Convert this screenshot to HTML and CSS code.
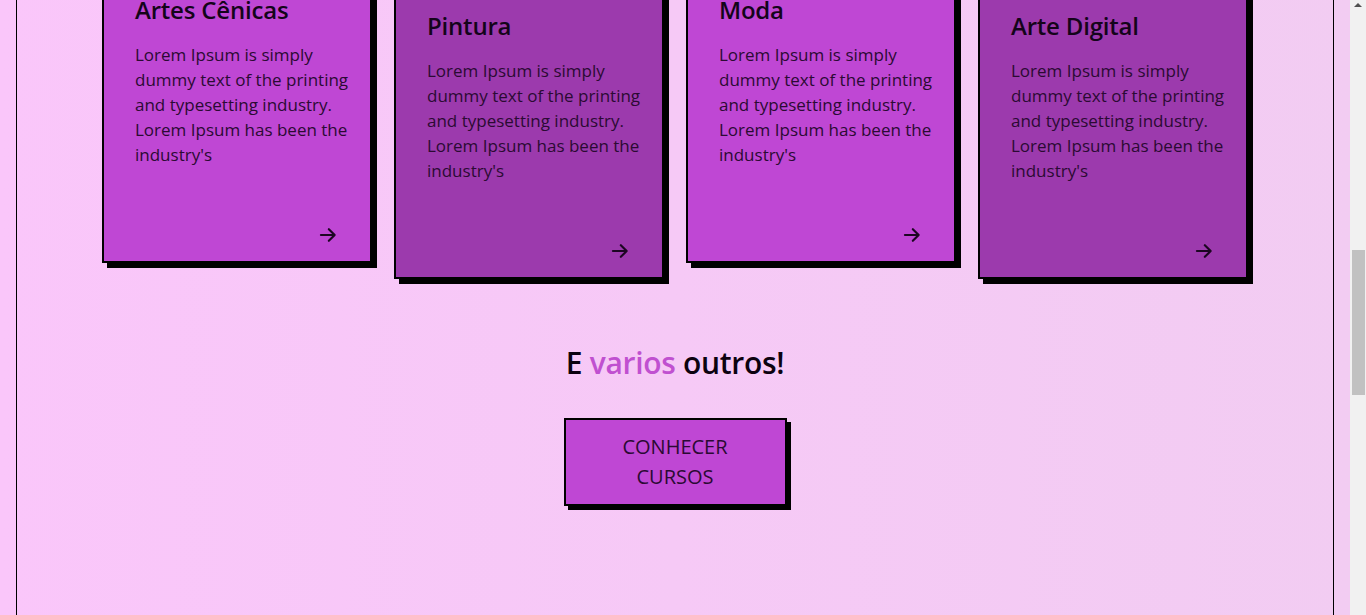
FILE: index.html
```html
<!DOCTYPE html>
<html lang="pt-BR">
<head>
<meta charset="utf-8">
<title>Cursos</title>
<link rel="stylesheet" href="styles.css">
</head>
<body>
<div class="page">
  <div class="frame">
    <section class="cards">
      <article class="card card-light">
        <h3 class="card-title">Artes Cênicas</h3>
        <p class="card-text">Lorem Ipsum is simply dummy text of the printing and typesetting industry. Lorem Ipsum has been the industry's</p>
        <div class="card-foot">
          <svg class="arrow" viewBox="0 0 24 24" width="20" height="20"><path d="M3.5 12h16.5M13 5l7 7-7 7" fill="none" stroke="#1c0622" stroke-width="2.6" stroke-linecap="round" stroke-linejoin="round"/></svg>
        </div>
      </article>
      <article class="card card-dark card-low">
        <h3 class="card-title">Pintura</h3>
        <p class="card-text">Lorem Ipsum is simply dummy text of the printing and typesetting industry. Lorem Ipsum has been the industry's</p>
        <div class="card-foot">
          <svg class="arrow" viewBox="0 0 24 24" width="20" height="20"><path d="M3.5 12h16.5M13 5l7 7-7 7" fill="none" stroke="#1c0622" stroke-width="2.6" stroke-linecap="round" stroke-linejoin="round"/></svg>
        </div>
      </article>
      <article class="card card-light">
        <h3 class="card-title">Moda</h3>
        <p class="card-text">Lorem Ipsum is simply dummy text of the printing and typesetting industry. Lorem Ipsum has been the industry's</p>
        <div class="card-foot">
          <svg class="arrow" viewBox="0 0 24 24" width="20" height="20"><path d="M3.5 12h16.5M13 5l7 7-7 7" fill="none" stroke="#1c0622" stroke-width="2.6" stroke-linecap="round" stroke-linejoin="round"/></svg>
        </div>
      </article>
      <article class="card card-dark card-low">
        <h3 class="card-title">Arte Digital</h3>
        <p class="card-text">Lorem Ipsum is simply dummy text of the printing and typesetting industry. Lorem Ipsum has been the industry's</p>
        <div class="card-foot">
          <svg class="arrow" viewBox="0 0 24 24" width="20" height="20"><path d="M3.5 12h16.5M13 5l7 7-7 7" fill="none" stroke="#1c0622" stroke-width="2.6" stroke-linecap="round" stroke-linejoin="round"/></svg>
        </div>
      </article>
    </section>
    <section class="more">
      <h2 class="more-title">E <span class="accent">varios</span> outros!</h2>
      <a class="more-button" href="#">CONHECER CURSOS</a>
    </section>
  </div>
</div>
<div class="scrollbar">
  <div class="scroll-up"></div>
  <div class="scroll-thumb"></div>
</div>
</body>
</html>
```

FILE: styles.css
```css
* { box-sizing: border-box; }

html, body {
  margin: 0;
  height: 615px;
  overflow: hidden;
}

body {
  display: flex;
  font-family: "Open Sans", "DejaVu Sans", sans-serif;
}

.page {
  flex: 1;
  height: 615px;
  padding: 0 16px;
  background: linear-gradient(to right, #fac6fa, #f2ccf2);
}

.frame {
  height: 100%;
  border-left: 1px solid #000;
  border-right: 1px solid #000;
  display: flex;
  flex-direction: column;
  align-items: center;
}

.cards {
  display: flex;
  align-items: flex-start;
  gap: 22px;
  margin-top: -26px;
}

.card {
  width: 270px;
  height: 289px;
  border: 2px solid #000;
  box-shadow: 5px 5px 0 #000;
  padding: 16px 32px 16px 31px;
  display: flex;
  flex-direction: column;
  color: #2b0a33;
}

.card-light { background: #bf47d4; }
.card-dark { background: #9c3aad; }
.card-low { margin-top: 16px; }

.card-title {
  margin: 0 0 14px;
  font-size: 24px;
  line-height: 36px;
  font-weight: 600;
  color: #14041a;
  letter-spacing: -0.2px;
}

.card-text {
  margin: 0 -12px 0 0;
  font-size: 17px;
  line-height: 25px;
  font-weight: 400;
}

.card-foot {
  margin-top: auto;
  display: flex;
  justify-content: flex-end;
}

.arrow { display: block; }

.more {
  display: flex;
  flex-direction: column;
  align-items: center;
}

.more-title {
  margin: 64px 0 35px;
  font-size: 30px;
  line-height: 40px;
  font-weight: 600;
  color: #0c0210;
  letter-spacing: -0.3px;
}

.accent { color: #c050d0; }

.more-button {
  width: 223px;
  padding: 12px 44px;
  border: 2px solid #000;
  box-shadow: 4px 4px 0 #000;
  background: #bf47d4;
  color: #2b0a33;
  text-align: center;
  text-decoration: none;
  font-size: 20px;
  line-height: 30px;
  font-weight: 400;
}

.scrollbar {
  width: 16px;
  height: 615px;
  background: #f1f1f1;
  display: flex;
  flex-direction: column;
  align-items: center;
}

.scroll-up {
  margin-top: 3px;
  width: 0;
  height: 0;
  border-left: 4px solid transparent;
  border-right: 4px solid transparent;
  border-bottom: 4px solid #505050;
}

.scroll-thumb {
  margin-top: 243px;
  width: 13px;
  height: 145px;
  background: #c1c1c1;
}
```
